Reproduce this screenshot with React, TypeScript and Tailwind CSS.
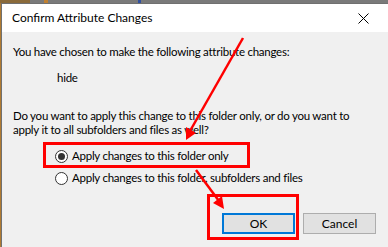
import React from "react";

export default function App() {
  const font = { fontFamily: 'Lato, "Liberation Sans", Arial, sans-serif' };
  return (
    <div className="relative w-[388px] h-[247px] overflow-hidden bg-[#f0f0f0]" style={font}>
      {/* background strip */}
      <div className="h-[3px] w-full bg-[#7a7a7a] flex">
        <div className="w-[30px] bg-[#8a6a3a]" />
        <div className="w-[14px]" />
        <div className="w-[4px] bg-[#c08030]" />
        <div className="w-[90px]" />
        <div className="w-[3px] bg-[#3050a0]" />
      </div>
      <div className="flex h-[244px]">
        <div className="w-[1px] bg-[#b07a30]" />
        <div className="flex-1 flex flex-col border-l border-t border-[#707070]">
          {/* title bar */}
          <div className="h-[28px] bg-white flex items-center pl-[10px] pr-[10px] text-[12px] text-black">
            <span className="flex-1 whitespace-nowrap">Confirm Attribute Changes</span>
            <svg width="11" height="11" viewBox="0 0 11 11" className="mr-[9px]">
              <path d="M0.5 0.5 L10.5 10.5 M10.5 0.5 L0.5 10.5" stroke="#000" strokeWidth="1" />
            </svg>
          </div>
          {/* body */}
          <div className="flex-1 bg-[#f0f0f0] text-[11.5px] tracking-[-0.25px] text-black flex flex-col pl-[11px] whitespace-nowrap">
            <div className="mt-[12px] leading-[16px]">You have chosen to make the following attribute changes:</div>
            <div className="mt-[10px] ml-[44px] leading-[16px]">hide</div>
            <div className="mt-[23px] leading-[14px]">
              Do you want to apply this change to this folder only, or do you want to
              <br />
              apply it to all subfolders and files as well?
            </div>
            <div className="mt-[11px] ml-[42px] flex items-center gap-[4px] h-[16px]">
              <span className="w-[13px] h-[13px] rounded-full border border-[#333] bg-white flex items-center justify-center">
                <span className="w-[7px] h-[7px] rounded-full bg-[#333]" />
              </span>
              <span>Apply changes to this folder only</span>
            </div>
            <div className="mt-[6px] ml-[42px] flex items-center gap-[4px] h-[16px]">
              <span className="w-[13px] h-[13px] rounded-full border border-[#333] bg-white" />
              <span>Apply changes to this folder, subfolders and files</span>
            </div>
            <div className="mt-[27px] ml-[209px] flex gap-[8px] tracking-normal text-[12px]">
              <div className="w-[73px] h-[21px] bg-[#e1e1e1] border-2 border-[#0078d7] flex items-center justify-center">OK</div>
              <div className="w-[73px] h-[21px] bg-[#e1e1e1] border border-[#adadad] flex items-center justify-center">Cancel</div>
            </div>
          </div>
        </div>
      </div>
      {/* annotations */}
      <svg className="absolute left-0 top-0" width="388" height="247" viewBox="0 0 388 247">
        <rect x="44.5" y="143.5" width="204" height="23" fill="none" stroke="#ff0000" strokeWidth="3" />
        <rect x="208.5" y="195.5" width="89" height="43" fill="none" stroke="#ff0000" strokeWidth="3" />
        <line x1="243" y1="38" x2="190" y2="131" stroke="#ff0000" strokeWidth="2.5" />
        <polygon points="186,140 186,127 196,133" fill="#ff0000" />
        <line x1="196" y1="170" x2="219" y2="201" stroke="#ff0000" strokeWidth="2.5" />
        <polygon points="224,209 213,203 222,196" fill="#ff0000" />
      </svg>
    </div>
  );
}
